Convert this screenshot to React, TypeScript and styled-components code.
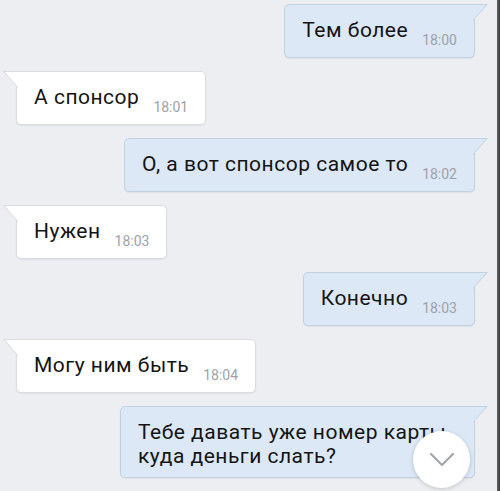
import styled, { createGlobalStyle, css } from 'styled-components';

type Side = 'in' | 'out';

interface Message {
  id: number;
  side: Side;
  text: string;
  time?: string;
}

// последнее сообщение: время скрыто под кнопкой прокрутки
const messages: Message[] = [
  { id: 1, side: 'out', text: 'Тем более', time: '18:00' },
  { id: 2, side: 'in', text: 'А спонсор', time: '18:01' },
  { id: 3, side: 'out', text: 'О, а вот спонсор самое то', time: '18:02' },
  { id: 4, side: 'in', text: 'Нужен', time: '18:03' },
  { id: 5, side: 'out', text: 'Конечно', time: '18:03' },
  { id: 6, side: 'in', text: 'Могу ним быть', time: '18:04' },
  {
    id: 7,
    side: 'out',
    text: 'Тебе давать уже номер карты, куда деньги слать?',
  },
];

const App = () => {
  return (
    <>
      <GlobalStyle />
      <StyledScreen>
        <StyledFeed>
          {messages.map((msg) => (
            <StyledRow key={msg.id} $side={msg.side}>
              <StyledBubble $side={msg.side}>
                <StyledText>
                  {msg.text}
                  {msg.time && <StyledTime>{msg.time}</StyledTime>}
                </StyledText>
              </StyledBubble>
            </StyledRow>
          ))}
        </StyledFeed>
        <StyledEdge />
        <StyledScrollBtn aria-label="scroll down">
          <svg width="24" height="13" viewBox="0 0 24 13">
            <polyline
              points="1,1 12,12 23,1"
              fill="none"
              stroke="#a3a7ac"
              strokeWidth="2.2"
              strokeLinecap="round"
              strokeLinejoin="round"
            />
          </svg>
        </StyledScrollBtn>
      </StyledScreen>
    </>
  );
};

export default App;

const GlobalStyle = createGlobalStyle`
  html, body {
    margin: 0;
    padding: 0;
    background: #eceef1;
  }
  body {
    font-family: Roboto, 'Liberation Sans', sans-serif;
  }
`;

const StyledScreen = styled.div`
  position: relative;
  display: flex;
  width: 500px;
  height: 491px;
  overflow: hidden;
  background: #eceef1;
`;

const StyledFeed = styled.div`
  flex: 1;
  display: flex;
  flex-direction: column;
  gap: 13px;
  padding: 4px 22px 0 16px;
`;

const StyledEdge = styled.div`
  width: 3px;
  background: linear-gradient(to right, #6b6c6e, #333435);
`;

const StyledRow = styled.div<{ $side: Side }>`
  display: flex;
  justify-content: ${({ $side }) => ($side === 'out' ? 'flex-end' : 'flex-start')};
`;

const outColors = css`
  background: #dce8f5;
  border-color: #c3d2e3;
`;

const inColors = css`
  background: #ffffff;
  border-color: #d9dce1;
`;

const StyledBubble = styled.div<{ $side: Side }>`
  position: relative;
  max-width: 319px;
  min-height: 24px;
  padding: 13px 17px 9px;
  border: 1px solid;
  border-radius: 5px;
  box-shadow: 0 1px 1px rgba(60, 80, 110, 0.08);
  ${({ $side }) => ($side === 'out' ? outColors : inColors)}
  ${({ $side }) =>
    $side === 'out'
      ? css`
          border-top-right-radius: 0;
        `
      : css`
          border-top-left-radius: 0;
        `}

  &::before,
  &::after {
    content: '';
    position: absolute;
  }

  &::before {
    top: -1px;
    width: 15px;
    height: 17px;
    background: ${({ $side }) => ($side === 'out' ? '#c3d2e3' : '#d9dce1')};
    ${({ $side }) =>
      $side === 'out'
        ? css`
            right: -14px;
            clip-path: polygon(0 0, 100% 0, 0 100%);
          `
        : css`
            left: -14px;
            clip-path: polygon(0 0, 100% 0, 100% 100%);
          `}
  }

  &::after {
    top: 0;
    width: 13px;
    height: 15px;
    background: ${({ $side }) => ($side === 'out' ? '#dce8f5' : '#ffffff')};
    ${({ $side }) =>
      $side === 'out'
        ? css`
            right: -12px;
            clip-path: polygon(0 0, 100% 0, 0 100%);
          `
        : css`
            left: -12px;
            clip-path: polygon(0 0, 100% 0, 100% 100%);
          `}
  }
`;

const StyledText = styled.div`
  font-size: 21px;
  line-height: 24px;
  letter-spacing: 0.5px;
  color: #141414;
`;

const StyledTime = styled.span`
  float: right;
  margin: 14px 0 0 14px;
  font-size: 14px;
  line-height: 16px;
  letter-spacing: 0;
  color: #9ca2a9;
`;

const StyledScrollBtn = styled.button`
  position: absolute;
  right: 30px;
  bottom: 3px;
  width: 57px;
  height: 57px;
  display: flex;
  align-items: center;
  justify-content: center;
  padding: 0;
  border: none;
  border-radius: 50%;
  background: #ffffff;
  box-shadow: 0 1px 4px rgba(0, 0, 0, 0.18);
  cursor: pointer;
`;
